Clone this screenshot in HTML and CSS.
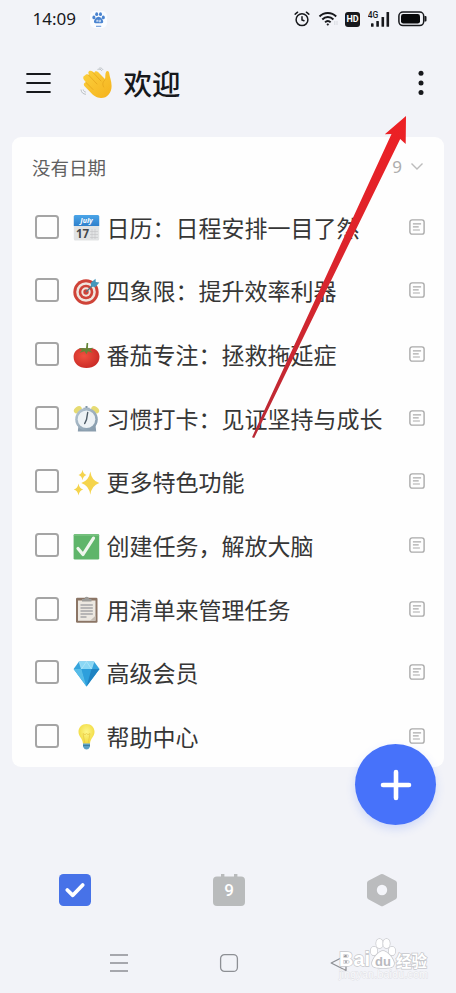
FILE: index.html
```html
<!DOCTYPE html>
<html lang="zh-CN">
<head>
<meta charset="utf-8">
<meta name="viewport" content="width=device-width, initial-scale=1">
<title>欢迎</title>
<link rel="stylesheet" href="styles.css">
</head>
<body>
<svg class="defs" width="0" height="0" aria-hidden="true">
  <defs>
    <linearGradient id="gBlue" x1="0" y1="0" x2="0" y2="1"><stop offset="0" stop-color="#4aa5e8"/><stop offset="1" stop-color="#2f80cc"/></linearGradient>
    <radialGradient id="gTomato" cx=".4" cy=".4" r=".65"><stop offset="0" stop-color="#f0503f"/><stop offset="1" stop-color="#c92a26"/></radialGradient>
    <linearGradient id="gClock" x1="0" y1="0" x2="1" y2="1"><stop offset="0" stop-color="#b8c8d4"/><stop offset="1" stop-color="#8297a8"/></linearGradient>
    <linearGradient id="gHand" x1="0" y1="0" x2="1" y2="1"><stop offset="0" stop-color="#fbd03d"/><stop offset="1" stop-color="#f5b21d"/></linearGradient>
    <radialGradient id="gBulb" cx=".5" cy=".4" r=".6"><stop offset="0" stop-color="#fdf68a"/><stop offset="1" stop-color="#f1d93c"/></radialGradient>
    <symbol id="note" viewBox="0 0 16 16"><rect x=".9" y=".9" width="14.2" height="14.2" rx="2.2" fill="none" stroke="#aaa" stroke-width="1.4"/><path d="M3.9 4.8h8.2M3.9 7.9h5.8M3.9 11h7" stroke="#aaa" stroke-width="1.2" fill="none"/></symbol>
  </defs>
</svg>
<div class="screen">
  <header class="status">
    <span class="clock">14:09</span>
    <svg class="paw" width="17" height="17" viewBox="0 0 17 17"><rect width="17" height="17" rx="5" fill="#fafcff"/><g fill="#4b84d0"><ellipse cx="3.900" cy="6.400" rx="1.500" ry="1.900"/><ellipse cx="6.700" cy="3.200" rx="1.500" ry="1.900"/><ellipse cx="10.500" cy="3.200" rx="1.500" ry="1.900"/><ellipse cx="13.300" cy="6.400" rx="1.500" ry="1.900"/><path d="M8.600 5.800c2 0 4.800 3 4.600 5.200-.2 1.800-2.800 1.300-4.600 1.300s-4.400.5-4.600-1.300c-.2-2.200 2.600-5.200 4.600-5.200z"/><path d="M6 14.800h5.200v.9H6z"/></g><path d="M6.800 10.800V9.200h1v1.600M9.200 8.800v2h1.200v-2" fill="none" stroke="#fff" stroke-width=".7"/></svg>
    <span class="spacer"></span>
    <svg class="s-alarm" width="16" height="16" viewBox="0 0 16 16" fill="none" stroke="#17181c" stroke-width="1.5" stroke-linecap="round"><circle cx="8" cy="8.7" r="5.9"/><path d="M8 5.7v3.200l2 .9M1.200 3.200L3.600 1.200M14.800 3.200L12.400 1.200"/></svg>
    <svg class="s-wifi" width="21" height="16" viewBox="0 0 21 16" fill="none" stroke="#17181c" stroke-width="1.900"><path d="M1.500 5.500C6 .8 13.600 .8 18.200 5.500M4.300 8.500c3.100-3.300 8-3.300 11.100 0M7.100 11.300c1.500-1.700 4-1.700 5.500 0"/><circle cx="9.800" cy="13.500" r=".8" fill="#17181c" stroke-width=".6"/><path d="M16.800 10v4M19 10v4" stroke="#d8dae0" stroke-width="1"/></svg>
    <span class="hd">HD</span>
    <svg class="s-signal" width="22" height="17" viewBox="0 0 22 17"><text x="-.3" y="7" class="net">4G</text><g fill="#17181c"><rect x="3" y="12.300" width="2.600" height="3.500" rx=".6"/><rect x="8.300" y="10" width="2.600" height="5.800" rx=".6"/><rect x="13.500" y="6" width="2.600" height="9.800" rx=".6"/><rect x="18.500" y="1" width="2.600" height="14.800" rx=".6"/></g></svg>
    <svg width="29" height="16" viewBox="0 0 29 16"><rect x=".9" y="1" width="24.800" height="13.600" rx="4" fill="none" stroke="#17181c" stroke-width="1.500"/><rect x="3" y="3.100" width="19" height="9.400" rx="2.300" fill="#08090b"/><path d="M26.500 5h1q1 0 1 1v3.600q0 1-1 1h-1z" fill="#17181c"/></svg>
  </header>

  <div class="titlebar">
    <svg class="menu" width="25" height="22" viewBox="0 0 25 22"><path d="M1.200 2h22.600M1.200 11h22.600M1.200 20h22.600" stroke="#17181c" stroke-width="2.200" stroke-linecap="round"/></svg>
    <svg class="wave" width="34" height="34" viewBox="0 0 34 34">
      <path d="M5 8.500C6 6.500 8 7 9 8L8.300 5.800c0-2.500 3-2.600 4.300-1.200l1.500 1.500c.5-2.300 2.500-2.500 4-1l6.800 7c.8-2.300 0-5 1.100-7.200.9-1.700 3-1 3.200 1 .4 4.200 2.400 7.600 2.400 13 0 6.800-4.500 12.300-10.700 12.100-4.500-.1-7.500-2.600-10-5.200L4.600 19.200c-1.700-1.900-.3-3.900 1.500-3.700l-2-2.500C2.600 11 3.300 8.700 5 8.500z" fill="url(#gHand)"/>
      <path d="M8.500 8l8.500 9M13 5.500l8 8.500M6 15.500l7 7M25 13c-2.500 2-2.800 4.500-1.300 7" fill="none" stroke="#e5a41c" stroke-width=".8" stroke-linecap="round"/>
      <path d="M1 22.500c.3 3 2 4.600 5 4.800M3.200 22.500c.3 1.500 1.200 2.400 2.600 2.600M17.500 2.400c2-.8 3.500 0 4.400 1.500M19.300 1c1.800-.2 3 .5 3.700 1.800" fill="none" stroke="#b4babe" stroke-width=".9"/>
    </svg>
    <h1>欢迎</h1>
    <span class="spacer"></span>
    <svg class="more" width="8" height="26" viewBox="0 0 8 26" fill="#17181c"><circle cx="4" cy="3.300" r="2.500"/><circle cx="4" cy="13" r="2.500"/><circle cx="4" cy="22.600" r="2.500"/></svg>
  </div>

  <main class="card">
    <div class="group"><span>没有日期</span><span class="spacer"></span><span class="count">9</span><svg width="14" height="9" viewBox="0 0 14 9"><path d="M1.500 1.500L7 7l5.500-5.500" fill="none" stroke="#bcbcbc" stroke-width="1.400"/></svg></div>
    <ul class="tasks">
      <li><i class="box"></i>
        <svg class="emo" viewBox="0 0 27 27"><rect x=".8" y="1" width="25.400" height="25.400" rx="1.500" fill="#e1e3e4"/><path d="M.8 12V2.500Q.8 1 2.300 1h22.400q1.500 0 1.500 1.500V12z" fill="url(#gBlue)"/><path d="M17 17.500h8M17 20.500h8M17 23.500h8M19 15v10M22 15v10" stroke="#c3c5c6" stroke-width=".6"/><text x="13.500" y="9" class="july">July</text><text x="9.500" y="24.300" class="day">17</text></svg>
        <span class="label">日历：日程安排一目了然</span><svg class="note"><use href="#note"/></svg></li>
      <li><i class="box"></i>
        <svg class="emo" viewBox="0 0 27 27"><circle cx="13" cy="14" r="12.700" fill="#cf4338"/><circle cx="13" cy="14" r="9.800" fill="#f0e5de"/><circle cx="13" cy="14" r="7.300" fill="#cf4338"/><circle cx="13" cy="14" r="4.700" fill="#f0e5de"/><circle cx="13" cy="14" r="2.700" fill="#cf4338"/><path d="M13 14l8-8" stroke="#56737f" stroke-width="1.300"/><path d="M17.800 8.600l.3-4L22.500.8l.3 3.200 3.600.5-4 4.500z" fill="#4597bc"/></svg>
        <span class="label">四象限：提升效率利器</span><svg class="note"><use href="#note"/></svg></li>
      <li><i class="box"></i>
        <svg class="emo" viewBox="0 0 27 27"><path d="M13.500 6.500c7-2.200 13 1.700 13 8.200 0 6.800-5.500 11.300-13 11.300S.6 21.500.6 14.700c0-6.500 6-10.400 12.900-8.200z" fill="url(#gTomato)"/><path d="M13 6.200L13.600 1h1.600l-.3 5.200 5.500-.5-3.200 2.500 2.500 2.600-4.700-1.600-1.500 3-2-3-5 1.600 2.500-2.900-3.500-2z" fill="#648638"/></svg>
        <span class="label">番茄专注：拯救拖延症</span><svg class="note"><use href="#note"/></svg></li>
      <li><i class="box"></i>
        <svg class="emo" viewBox="0 0 27 27"><path d="M5.500 20l-.7 6.500h18.400l-.7-6.500z" fill="#8b9eae"/><ellipse cx="4.800" cy="4.800" rx="4.300" ry="3" transform="rotate(-35 4.800 4.800)" fill="#e6db72"/><ellipse cx="22.200" cy="4.800" rx="4.300" ry="3" transform="rotate(35 22.200 4.800)" fill="#e6db72"/><path d="M12.500 1h2v4h-2z" fill="#8196a8"/><path d="M10.500 3.500h6" stroke="#8196a8" stroke-width="1.500"/><circle cx="13.500" cy="14.300" r="11.300" fill="url(#gClock)"/><circle cx="13.500" cy="14.300" r="8.800" fill="#edf2f5"/><path d="M14.700 7.500l-1.200 7-1.800 4" fill="none" stroke="#4b5964" stroke-width="1.400" stroke-linecap="round"/></svg>
        <span class="label">习惯打卡：见证坚持与成长</span><svg class="note"><use href="#note"/></svg></li>
      <li><i class="box"></i>
        <svg class="emo" viewBox="0 0 27 27" fill="#f5d44c"><path d="M17.300 2.500q1.300 9 9 11.600-7.700 2.600-9 11.600-1.300-9-9-11.600 7.700-2.600 9-11.600z"/><path d="M9.500.8q.7 4.200 4 5.200-3.300 1-4 5.200-.7-4.200-4-5.200 3.300-1 4-5.200zM5.500 14.500q.8 4.800 4.700 6-3.900 1.200-4.700 6-.8-4.800-4.700-6 3.900-1.200 4.700-6z"/></svg>
        <span class="label">更多特色功能</span><svg class="note"><use href="#note"/></svg></li>
      <li><i class="box"></i>
        <svg class="emo" viewBox="0 0 27 27"><rect x=".6" y=".9" width="25.600" height="25.600" rx="1.300" fill="#5fb56a"/><path d="M1 2h25" stroke="#82c98a" stroke-width="1.200"/><path d="M5 15.500l5 6L20.500 5.200" fill="none" stroke="#eff6ed" stroke-width="3.200" stroke-linecap="round" stroke-linejoin="round"/></svg>
        <span class="label">创建任务，解放大脑</span><svg class="note"><use href="#note"/></svg></li>
      <li><i class="box"></i>
        <svg class="emo" viewBox="0 0 27 27"><rect x="3" y="1.800" width="21.500" height="25" rx="1.200" fill="#8b7565"/><path d="M5 4.500h17.500v20.300H5z" fill="#ece8e1"/><path d="M17 24.800l5.500-5v5z" fill="#c5bdb4"/><path d="M9 5.500V3h2.500q0-2.200 2.200-2.200T16 3h2.500v2.500z" fill="#9c9b98"/><path d="M7.500 9h12.300M7.500 12h12.300M7.500 15h12.300M7.500 18h12.300M7.500 21h6" stroke="#81848b" stroke-width="1.100"/></svg>
        <span class="label">用清单来管理任务</span><svg class="note"><use href="#note"/></svg></li>
      <li><i class="box"></i>
        <svg class="emo" viewBox="0 0 27 27"><path d="M6 1.500h15l5.500 7.500-13 17.500L.6 9z" fill="#35a4dc"/><path d="M6 1.500h15L18.500 9h-10z" fill="#8ad7f4"/><path d="M.6 9h7.900l5 17.500z" fill="#56bce8"/><path d="M8.500 9h10l-5 17.500z" fill="#2d9fdc"/><path d="M18.500 9h8l-13 17.500z" fill="#1f83c2"/><path d="M6 1.500L8.500 9l5-7.500 5 7.500L21 1.500" fill="none" stroke="#bce9f8" stroke-width=".6"/></svg>
        <span class="label">高级会员</span><svg class="note"><use href="#note"/></svg></li>
      <li><i class="box"></i>
        <svg class="emo" viewBox="0 0 27 27"><path d="M13.500 1c4.800 0 8 3.500 8 7.800 0 5-4.200 6.500-4.500 12H10c-.3-5.500-4.500-7-4.500-12C5.500 4.500 8.700 1 13.500 1z" fill="url(#gBulb)"/><path d="M11.700 19.800L10 10.500l2 1.200 1.500-1.200 1.500 1.200 2-1.200-1.700 9.300" fill="none" stroke="#e6c544" stroke-width=".7"/><path d="M10 20.500h7v3.300q-1 2.700-3.500 2.700T10 23.800z" fill="#5a9fc4"/><path d="M10 22.500h7" stroke="#397798" stroke-width=".8"/></svg>
        <span class="label">帮助中心</span><svg class="note"><use href="#note"/></svg></li>
    </ul>
  </main>

  <nav class="tabs">
    <svg width="34" height="34" viewBox="0 0 34 34"><rect x="1" y="1" width="32" height="32" rx="4.500" fill="#4772e8"/><path d="M9.300 17l5.500 5.300L24.700 12" fill="none" stroke="#fff" stroke-width="3.800" stroke-linecap="round" stroke-linejoin="round"/></svg>
    <svg width="34" height="34" viewBox="0 0 34 34"><path d="M9 1h3.400v4H9zM22 1h3.400v4H22z" fill="#b9bbbc"/><rect x="1" y="3.500" width="32" height="29.500" rx="4" fill="#b9bbbc"/><text x="17" y="23.200" class="date">9</text></svg>
    <svg width="34" height="34" viewBox="0 0 34 34"><path d="M17 3.500L29.500 10v14L17 30.700 4.500 24V10z" fill="#bbbcbe" stroke="#bbbcbe" stroke-width="5" stroke-linejoin="round"/><circle cx="17" cy="17" r="5.200" fill="#f4f5fa"/></svg>
  </nav>

  <footer class="system">
    <svg width="20" height="20" viewBox="0 0 20 20"><path d="M1 2h18M1 10h18M1 18h18" stroke="#8d8f94" stroke-width="1.300"/></svg>
    <svg width="20" height="20" viewBox="0 0 20 20"><rect x="1.600" y="1.600" width="16.800" height="16.800" rx="4" fill="none" stroke="#8d8f94" stroke-width="1.300"/></svg>
    <svg width="20" height="20" viewBox="0 0 20 20"><path d="M17 2.500v15L2.200 10z" fill="none" stroke="#8d8f94" stroke-width="1.300" stroke-linejoin="round"/></svg>
  </footer>

  <button class="fab" aria-label="添加"><svg width="32" height="32" viewBox="0 0 32 32"><path d="M16 3v26M3 16h26" stroke="#fff" stroke-width="4.600" stroke-linecap="round"/></svg></button>

  <svg class="arrow" width="154" height="323" viewBox="0 0 154 323"><defs><linearGradient id="gArrow" x1="0" y1="1" x2="0" y2="0"><stop offset="0" stop-color="#b92a35"/><stop offset=".5" stop-color="#d9252d"/><stop offset="1" stop-color="#ed2024"/></linearGradient></defs><path d="M154 0l-.3 28-5.500-5L2.200 322l-2.200-.8L139.500 18l-6.700.2z" fill="url(#gArrow)"/></svg>

  <svg class="watermark" width="112" height="48" viewBox="0 0 112 48">
    <text x="9" y="41" class="wm-u" textLength="89">jingyan.baidu.com</text>
    <g class="mark">
      <text x="9" y="29" class="wm-l" textLength="31" lengthAdjust="spacingAndGlyphs">Bai</text>
      <ellipse cx="44" cy="14" rx="3.300" ry="4.300"/><ellipse cx="49.500" cy="6.500" rx="3.300" ry="4.600"/><ellipse cx="56.500" cy="6.500" rx="3.300" ry="4.600"/><ellipse cx="62" cy="14" rx="3.300" ry="4.300"/>
      <path d="M53 14c4 0 11 8 11 12.500 0 4-4 4.500-11 4.500s-11-.5-11-4.500C42 22 49 14 53 14z"/>
      <text x="66" y="29.500" class="wm-c">经验</text>
    </g>
    <text x="53" y="28.500" class="wm-d">du</text>
  </svg>
</div>
</body>
</html>
```
FILE: styles.css
```css
* { box-sizing: border-box; }
body {
  margin: 0;
  background: #f2f3f8;
  color: #363636;
  font-family: "Noto Sans", "Noto Sans CJK SC", sans-serif;
}
.defs { position: absolute; }
.screen {
  position: relative;
  width: 456px;
  height: 993px;
  overflow: hidden;
  display: flex;
  flex-direction: column;
}
.spacer { flex: 1; }
svg { display: block; flex: none; }

.status {
  height: 38px;
  display: flex;
  align-items: center;
  padding: 0 29px 0 32.5px;
  color: #17181c;
}
.clock { font-size: 17px; line-height: 38px; width: 57px; }
.paw { margin-top: 1px; }
.s-alarm { margin-right: 8px; }
.s-wifi { margin-right: 6px; }
.hd {
  width: 15px;
  height: 15px;
  margin-right: 8px;
  border-radius: 3px;
  background: #17181c;
  color: #fff;
  font: 700 9px/15px "Roboto", sans-serif;
  text-align: center;
}
.s-signal { margin-right: 8px; }
.net { font: 500 8.5px "Roboto", sans-serif; fill: #17181c; }

.titlebar {
  height: 99px;
  display: flex;
  align-items: center;
  padding: 0 31px 9px 26px;
}
.wave { margin: 2px 10px 0 28.5px; }
.more { margin-bottom: 1px; }
h1 {
  margin: 0 0 1px;
  font: 500 28.5px/40px "Noto Sans CJK SC", sans-serif;
  color: #17181c;
}

.card {
  height: 630px;
  margin: 0 12px;
  padding: 0 19px 0 20px;
  border-radius: 9px;
  background: #fefefe;
}
.group {
  height: 58px;
  padding-top: 1px;
  display: flex;
  align-items: center;
  font: 400 18.5px/28px "Noto Sans CJK SC", sans-serif;
  color: #606060;
}
.group svg { margin-right: 1px; }
.count { margin-right: 8px; font: 400 17px/28px "Noto Sans", sans-serif; color: #adadad; }
.tasks { margin: 0; padding: 0; list-style: none; }
.tasks li {
  height: 63.65px;
  display: flex;
  align-items: center;
  padding-left: 3px;
}
.box {
  width: 24px;
  height: 24px;
  border: 2px solid #a5a5a5;
  border-radius: 3.5px;
}
.emo { width: 27px; height: 27px; margin: 2px 7px 0 13.5px; }
.label {
  flex: 1;
  white-space: nowrap;
  font: 400 23px/32px "Noto Sans CJK SC", sans-serif;
}
.note { width: 16px; height: 16px; }
.july { font: italic 700 7px "Noto Sans", sans-serif; fill: #fff; text-anchor: middle; }
.day { font: 700 11.5px "Noto Sans", sans-serif; fill: #45484b; text-anchor: middle; }

.tabs {
  height: 155px;
  padding: 105.5px 57px 0 58px;
  display: flex;
  justify-content: space-between;
}
.date { font: 500 17px "Roboto", sans-serif; fill: #fff; text-anchor: middle; }
.system {
  padding: 31px 107px 0 109px;
  display: flex;
  justify-content: space-between;
}

.fab {
  position: absolute;
  left: 355px;
  top: 744px;
  width: 81px;
  height: 81px;
  padding: 0;
  border: 0;
  border-radius: 50%;
  background: #4772fa;
  box-shadow: 0 4px 10px rgba(71, 114, 250, .2);
  display: flex;
  align-items: center;
  justify-content: center;
}
.arrow { position: absolute; left: 252px; top: 116px; }

.watermark { position: absolute; left: 330px; top: 937px; }
.mark { fill: #fff; stroke: #c6c7cb; stroke-width: 1.4px; paint-order: stroke; }
.wm-l { font: 700 21px "Liberation Sans", sans-serif; }
.wm-c { font: 700 15.5px "Noto Sans CJK SC", sans-serif; }
.wm-d { font: 700 13px "Liberation Sans", sans-serif; fill: #b9babf; text-anchor: middle; }
.wm-u { font: 400 10.5px "Liberation Sans", sans-serif; fill: #fafafc; stroke: #dddee3; stroke-width: .8px; paint-order: stroke; }
```
